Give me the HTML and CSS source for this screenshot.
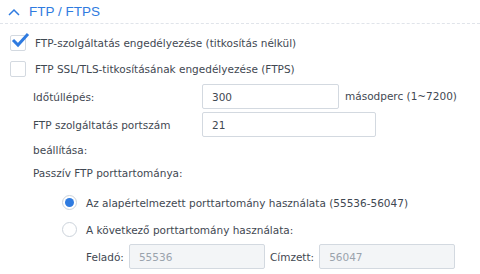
FILE: index.html
```html
<!DOCTYPE html>
<html lang="hu">
<head>
    <meta charset="UTF-8">
    <title>FTP / FTPS</title>
    <link rel="stylesheet" href="styles.css">
</head>
<body>
    <div class="szakasz">
        <div class="fejlec">
            <svg class="nyil" width="12" height="8" viewBox="0 0 12 8"><path d="M1 7 L6 2 L11 7" fill="none" stroke="#2f7be0" stroke-width="1.5"/></svg>
            <span class="cim">FTP / FTPS</span>
        </div>

        <div class="jelolok">
            <div class="sor-jelolo">
                <span class="jelolo">
                    <svg width="20" height="18" viewBox="0 0 20 18"><path d="M3 9 L8 14 L18 3" fill="none" stroke="#2f7be0" stroke-width="3"/></svg>
                </span>
                <span>FTP-szolgáltatás engedélyezése (titkosítás nélkül)</span>
            </div>
            <div class="sor-jelolo">
                <span class="jelolo"></span>
                <span>FTP SSL/TLS-titkosításának engedélyezése (FTPS)</span>
            </div>
        </div>

        <div class="mezo">
            <label class="felirat">Időtúllépés:</label>
            <div class="mezo-ertek">
                <input class="doboz rovid" type="text" value="300">
                <span class="mertekegyseg">másodperc (1~7200)</span>
            </div>
        </div>
        <div class="mezo">
            <label class="felirat">FTP szolgáltatás portszám beállítása:</label>
            <div class="mezo-ertek">
                <input class="doboz hosszu" type="text" value="21">
            </div>
        </div>

        <div class="passziv">Passzív FTP porttartománya:</div>

        <div class="radiok">
            <div class="sor-radio">
                <span class="radio bejelolt"></span>
                <span>Az alapértelmezett porttartomány használata (55536-56047)</span>
            </div>
            <div class="sor-radio">
                <span class="radio"></span>
                <span>A következő porttartomány használata:</span>
            </div>
            <div class="tartomany">
                <span>Feladó:</span>
                <input class="doboz tiltott" type="text" value="55536" disabled>
                <span>Címzett:</span>
                <input class="doboz tiltott" type="text" value="56047" disabled>
            </div>
        </div>
    </div>
</body>
</html>
```

FILE: styles.css
```css
body {
    margin: 0;
    background-color: #ffffff;
    color: #3f4852;
    font-family: "DejaVu Sans", Verdana, sans-serif;
    font-size: 10.5px;
}

.fejlec {
    display: flex;
    align-items: center;
    height: 23px;
    padding-left: 8px;
    border-bottom: 1px dashed #e0e4ea;
}

.nyil {
    margin-right: 9px;
}

.cim {
    color: #2f7be0;
    font-family: "Liberation Sans", Arial, sans-serif;
    font-size: 13.5px;
}

.jelolok {
    margin-top: 6px;
}

.sor-jelolo {
    display: flex;
    align-items: center;
    height: 26px;
    padding-left: 10px;
}

.jelolo {
    position: relative;
    width: 14px;
    height: 14px;
    border: 1px solid #d3d9e0;
    border-radius: 2px;
    margin-right: 9px;
}

.jelolo svg {
    position: absolute;
    left: -1px;
    top: -5px;
}

.mezo {
    display: grid;
    grid-template-columns: 169px 1fr;
    padding-left: 33px;
    margin-top: 2px;
}

.felirat {
    line-height: 25px;
    padding-top: 1px;
}

.mezo-ertek {
    display: flex;
    align-items: flex-start;
    gap: 6px;
}

.mertekegyseg {
    line-height: 25px;
}

.doboz {
    box-sizing: border-box;
    height: 25px;
    border: 1px solid #d3d9e0;
    border-radius: 2px;
    padding: 0 9px;
    font-family: "DejaVu Sans", Verdana, sans-serif;
    font-size: 10.5px;
    color: #3f4852;
    outline: none;
}

.rovid {
    width: 137px;
}

.hosszu {
    width: 174px;
}

.passziv {
    padding-left: 33px;
    line-height: 21px;
}

.radiok {
    padding-left: 62px;
    margin-top: 5px;
}

.sor-radio {
    display: flex;
    align-items: center;
    height: 27px;
}

.radio {
    box-sizing: border-box;
    width: 15px;
    height: 15px;
    border: 1px solid #ccd3db;
    border-radius: 50%;
    margin-right: 9px;
    display: flex;
    align-items: center;
    justify-content: center;
}

.radio.bejelolt::after {
    content: "";
    width: 9px;
    height: 9px;
    border-radius: 50%;
    background-color: #2f7be0;
}

.tartomany {
    display: flex;
    align-items: center;
    gap: 5px;
    padding-left: 24px;
    height: 27px;
}

.tiltott {
    width: 136px;
    background-color: #f3f5f7;
    color: #9aa3ad;
}
```
